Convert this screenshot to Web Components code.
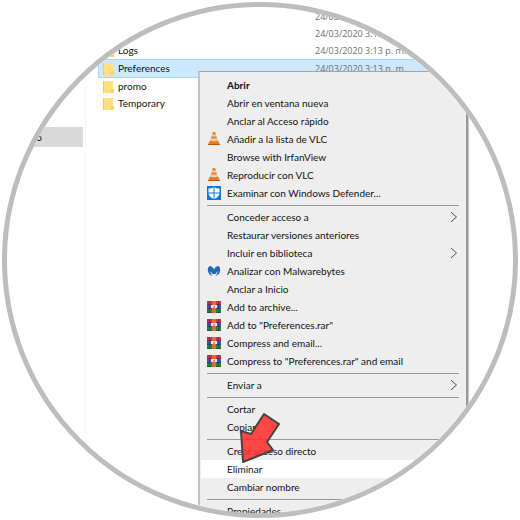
<!DOCTYPE html>
<html lang="es">
<head>
<meta charset="utf-8">
<meta name="viewport" content="width=device-width, initial-scale=1">
<title>Preferences</title>
<style>
  body {
    margin: 0;
    background: #fff;
    color: #111;
    font: 10px/18px Lato, "Open Sans", sans-serif;
  }
</style>
</head>
<body>
<round-lens>
  <nav-pane slot="nav" label="o"></nav-pane>
  <file-list>
    <file-row date="24/03/2020 3:13 p. m."></file-row>
    <file-row date="24/03/2020 3:13 p. m."></file-row>
    <file-row name="Logs" date="24/03/2020 3:13 p. m."></file-row>
    <file-row name="Preferences" date="24/03/2020 3:13 p. m." selected></file-row>
    <file-row name="promo"></file-row>
    <file-row name="Temporary"></file-row>
  </file-list>
  <context-menu slot="overlay">
    <menu-item primary>Abrir</menu-item>
    <menu-item>Abrir en ventana nueva</menu-item>
    <menu-item>Anclar al Acceso rápido</menu-item>
    <menu-item icon="vlc">Añadir a la lista de VLC</menu-item>
    <menu-item>Browse with IrfanView</menu-item>
    <menu-item icon="vlc">Reproducir con VLC</menu-item>
    <menu-item icon="defender">Examinar con Windows Defender...</menu-item>
    <menu-line></menu-line>
    <menu-item submenu>Conceder acceso a</menu-item>
    <menu-item>Restaurar versiones anteriores</menu-item>
    <menu-item submenu>Incluir en biblioteca</menu-item>
    <menu-item icon="malwarebytes">Analizar con Malwarebytes</menu-item>
    <menu-item>Anclar a Inicio</menu-item>
    <menu-item icon="rar">Add to archive...</menu-item>
    <menu-item icon="rar">Add to "Preferences.rar"</menu-item>
    <menu-item icon="rar">Compress and email...</menu-item>
    <menu-item icon="rar">Compress to "Preferences.rar" and email</menu-item>
    <menu-line></menu-line>
    <menu-item submenu>Enviar a</menu-item>
    <menu-line></menu-line>
    <menu-item>Cortar</menu-item>
    <menu-item>Copiar</menu-item>
    <menu-line></menu-line>
    <menu-item>Crear acceso directo</menu-item>
    <menu-item active>Eliminar</menu-item>
    <menu-item>Cambiar nombre</menu-item>
    <menu-line></menu-line>
    <menu-item>Propiedades</menu-item>
  </context-menu>
  <red-pointer slot="overlay"></red-pointer>
</round-lens>

<script>
const icons = {
  vlc: `
    <svg viewBox="0 0 14 14" width="14" height="14" aria-hidden="true">
      <path d="M2.500 9h9l1.500 4H1z" fill="#ec7a14"/>
      <path d="M1.400 12h11.200l.4 1H1z" fill="#b95608"/>
      <path d="M5.900 0h2.200L11 10c-1.500 1.200-6.500 1.200-8 0z" fill="#ed7d1a"/>
      <path d="M5.200 2.500h3.600l.6 2H4.600zM4 6.500h6l.6 2c-1.800.9-5.400.9-7.200 0z" fill="#e0d3c8"/>
    </svg>`,
  defender: `
    <svg viewBox="0 0 14 14" width="14" height="14" aria-hidden="true">
      <path d="M0 0h14v14H0z" fill="#0b78d4"/>
      <path d="M7 1c1.600 1 3.300 1.500 5.500 1.500V7c0 2.900-2.500 4.900-5.500 6.200C4 11.900 1.500 9.900 1.500 7V2.500C3.700 2.500 5.400 2 7 1z" fill="#fff"/>
      <path d="M7 1v12.500M1 7h12" stroke="#0b78d4"/>
    </svg>`,
  malwarebytes: `
    <svg viewBox="0 0 14 14" width="14" height="14" aria-hidden="true">
      <path d="M2.500 2C4.500 2 6 3.400 7 5.600 8 3.400 9.500 2 11.500 2c1.400 1.200 2 3 1.600 4.900-.5 2.500-2.100 4.300-4.600 5.100 1.500-1.500 2.100-3.100 2-4.900L8.600 10H5.400L3.500 7.100c-.1 1.800.5 3.400 2 4.900C3 11.200 1.400 9.400.9 6.900.5 5 1.100 3.200 2.500 2z" fill="#2268b2"/>
    </svg>`,
  rar: `
    <svg viewBox="0 0 14 14" width="14" height="14" aria-hidden="true">
      <path d="M0 1h14v4H0z" fill="#d0304c"/>
      <path d="M0 5h14v4H0z" fill="#4653b8"/>
      <path d="M0 9h14v4H0z" fill="#19883c"/>
      <path d="M0 4.500h14M0 8.500h14M0 12.500h14M2.500 1v12M11.500 1v12" stroke="#202331" stroke-opacity=".4"/>
      <path d="M5 1h4v12H5z" fill="#e26a24"/>
      <path d="M4 5h6v3H4z" fill="#eee6e5"/>
      <path d="M6 6h2v2H6z" fill="#c09a98"/>
    </svg>`
};

class RoundLens extends HTMLElement {
  constructor() {
    super();
    this.attachShadow({ mode: 'open' });
  }

  connectedCallback() {
    this.shadowRoot.innerHTML = `
      <style>
        :host {
          display: block;
          padding: 2px;
        }

        .circle {
          box-sizing: border-box;
          position: relative;
          display: flex;
          aspect-ratio: 1;
          border: 5px solid #bdbdbd;
          border-radius: 50%;
          overflow: hidden;
        }

        main {
          flex: 1;
          min-width: 0;
        }
      </style>
      <div class="circle">
        <slot name="nav"></slot>
        <main><slot></slot></main>
        <slot name="overlay"></slot>
      </div>
    `;
  }
}

class NavPane extends HTMLElement {
  constructor() {
    super();
    this.attachShadow({ mode: 'open' });
  }

  connectedCallback() {
    this.shadowRoot.innerHTML = `
      <style>
        :host {
          display: block;
          flex: none;
          width: 78px;
          padding-top: 120px;
          border-right: 1px solid #f5f5f5;
        }

        a {
          display: flex;
          justify-content: flex-end;
          margin-right: 2px;
          padding-right: 41px;
          line-height: 20px;
          white-space: nowrap;
          color: inherit;
          text-decoration: none;
          background: #d9d9d9;
        }
      </style>
      <nav><a href="#">${this.getAttribute('label')}</a></nav>
    `;
  }
}

class FileList extends HTMLElement {
  constructor() {
    super();
    this.attachShadow({ mode: 'open' });
  }

  connectedCallback() {
    this.shadowRoot.innerHTML = `
      <style>
        :host {
          display: block;
          padding: 1px 0 0 12px;
        }
      </style>
      <slot></slot>
    `;
  }
}

class FileRow extends HTMLElement {
  constructor() {
    super();
    this.attachShadow({ mode: 'open' });
  }

  connectedCallback() {
    const name = this.getAttribute('name') || '';
    const date = this.getAttribute('date') || '';
    this.shadowRoot.innerHTML = `
      <style>
        :host {
          display: grid;
          grid-template-columns: 12px 193px 1fr;
          column-gap: 4px;
          align-items: center;
          height: 17px;
          padding-left: 4px;
          line-height: 17px;
          white-space: nowrap;
        }

        :host([selected]) {
          padding-left: 3px;
          background: #cce8ff;
          border: 1px solid #a9d5f7;
        }

        time {
          color: #6d6d6d;
          font-family: "Open Sans", sans-serif;
          font-size: 9px;
        }
      </style>
      <svg viewBox="0 0 12 14" width="12" height="14" aria-hidden="true">
        <path d="M1 1h10v12H1z" fill="#ffdf80"/>
        <path d="M1 1h1v12H1z" fill="#f0cb62"/>
        <path d="M9 9h3v4H9z" fill="#f8d468"/>
      </svg>
      <span>${name}</span>
      <time>${date}</time>
    `;
  }
}

class ContextMenu extends HTMLElement {
  constructor() {
    super();
    this.attachShadow({ mode: 'open' });
  }

  connectedCallback() {
    this.shadowRoot.innerHTML = `
      <style>
        :host {
          box-sizing: border-box;
          position: absolute;
          top: 64px;
          left: 191px;
          width: 270px;
          padding: 4px 1px;
          background: #eee;
          border: 1px solid #a5a5a5;
          border-left: 2px solid #c4c4c4;
          border-right: 2px solid #979797;
          box-shadow: 1px 1px 1px #ccc;
        }
      </style>
      <div role="menu"><slot></slot></div>
    `;
  }
}

class MenuItem extends HTMLElement {
  constructor() {
    super();
    this.attachShadow({ mode: 'open' });
  }

  connectedCallback() {
    const icon = icons[this.getAttribute('icon')] || '';
    const arrow = this.hasAttribute('submenu')
      ? `<svg viewBox="0 0 8 12" width="8" height="12" aria-hidden="true">
           <path d="M1 1l5.500 5L1 11" fill="none" stroke="#4a4a55"/>
         </svg>`
      : '';
    this.shadowRoot.innerHTML = `
      <style>
        :host {
          display: block;
        }

        button {
          display: grid;
          grid-template-columns: 14px 1fr 8px;
          column-gap: 6px;
          align-items: center;
          width: 100%;
          height: 18px;
          padding: 0 7px 0 6px;
          border: 0;
          background: none;
          color: inherit;
          font: inherit;
          text-align: left;
          white-space: nowrap;
        }

        :host([primary]) button {
          font-weight: 700;
        }

        :host([active]) button {
          background: #fff;
        }

        .icon {
          display: flex;
        }
      </style>
      <button role="menuitem">
        <span class="icon">${icon}</span>
        <span><slot></slot></span>
        ${arrow}
      </button>
    `;
  }
}

class MenuLine extends HTMLElement {
  constructor() {
    super();
    this.attachShadow({ mode: 'open' });
  }

  connectedCallback() {
    this.shadowRoot.innerHTML = `
      <style>
        :host {
          display: block;
          padding: 3px 6px 2px;
        }

        hr {
          margin: 0;
          border: 0;
          border-top: 1px solid #999;
        }
      </style>
      <hr>
    `;
  }
}

class RedPointer extends HTMLElement {
  constructor() {
    super();
    this.attachShadow({ mode: 'open' });
  }

  connectedCallback() {
    this.shadowRoot.innerHTML = `
      <style>
        :host {
          position: absolute;
          top: 405px;
          left: 232px;
          pointer-events: none;
        }

        svg {
          display: block;
        }
      </style>
      <svg viewBox="0 0 42 52" width="42" height="52" aria-hidden="true">
        <path d="M25 2l15 10-12 18 6 8L4 50 2 19l10 3z" fill="#ff3030" fill-opacity=".88" stroke="#444" stroke-width="2" stroke-linejoin="round"/>
      </svg>
    `;
  }
}

customElements.define('round-lens', RoundLens);
customElements.define('nav-pane', NavPane);
customElements.define('file-list', FileList);
customElements.define('file-row', FileRow);
customElements.define('context-menu', ContextMenu);
customElements.define('menu-item', MenuItem);
customElements.define('menu-line', MenuLine);
customElements.define('red-pointer', RedPointer);
</script>
</body>
</html>
